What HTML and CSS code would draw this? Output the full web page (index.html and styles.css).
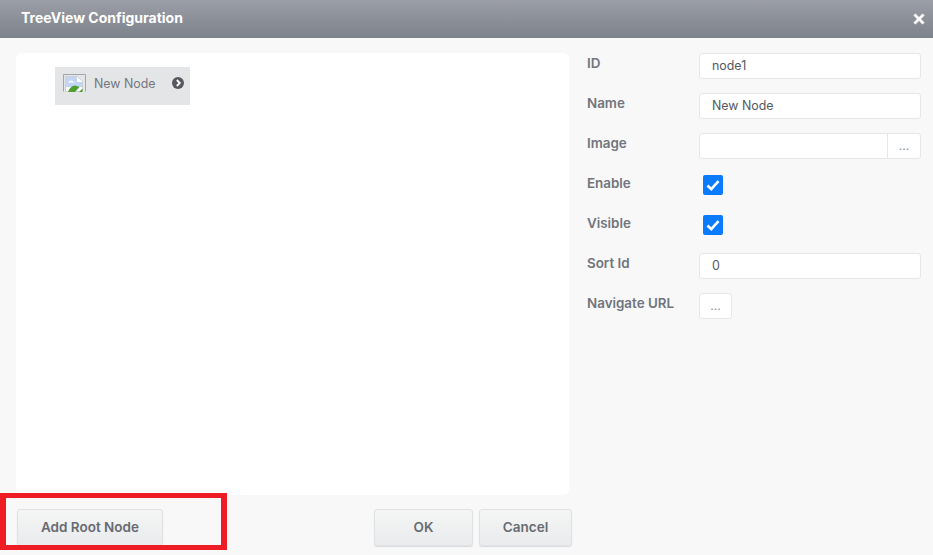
FILE: index.html
```html
<!DOCTYPE html>
<html lang="en">
<head>
<meta charset="utf-8">
<title>TreeView Configuration</title>
<link rel="stylesheet" href="styles.css">
</head>
<body>
<div class="dialog">
  <header class="titlebar">
    <span class="title">TreeView Configuration</span>
    <svg class="close" viewBox="0 0 12 12" width="12" height="12"><path d="M2.4 0.8 6 4.4 9.6 0.8 11.2 2.4 7.6 6 11.2 9.6 9.6 11.2 6 7.6 2.4 11.2 0.8 9.6 4.4 6 0.8 2.4Z" fill="#fff" stroke="#fff" stroke-width=".6" stroke-linejoin="round"/></svg>
  </header>
  <main class="body">
    <section class="tree">
      <div class="node">
        <svg class="broken" viewBox="0 0 23 18" width="23" height="18">
          <path d="M.5 17.500V.5h22v17" fill="none" stroke="#a4a6a9"/>
          <path d="M2.500 2.500h12l5 5v10h-17Z" fill="#fff" stroke="#c3c6cb" stroke-width=".8"/>
          <path d="M3 3h11v5h5v5H3Z" fill="#c2d6f3"/>
          <path d="M5 8.500q2-3 4.500-1.500l2.500 1.500Z" fill="#fff"/>
          <path d="M5 18q2-6 7-6.500 3 .5 4.500 1.500L12 18Z" fill="#4f9f33"/>
          <path d="M16 18l3.500-3.500V18Z" fill="#4f9f33"/>
        </svg>
        <span class="node-label">New Node</span>
        <svg class="node-arrow" viewBox="0 0 12 12" width="12" height="12"><circle cx="6" cy="6" r="6" fill="#55585e"/><path d="M4.800 3 7.800 6 4.800 9" fill="none" stroke="#fff" stroke-width="1.800"/></svg>
      </div>
    </section>
    <section class="props">
      <div class="row"><label class="label">ID</label><div class="field">node1</div></div>
      <div class="row"><label class="label">Name</label><div class="field">New Node</div></div>
      <div class="row"><label class="label">Image</label><div class="field picker"><span class="picker-value"></span><span class="dots-cell">...</span></div></div>
      <div class="row"><label class="label">Enable</label><span class="check"><svg viewBox="0 0 20 20" width="20" height="20"><path d="M4.500 10.500 8.300 14.200 15.500 6.200" fill="none" stroke="#fff" stroke-width="2.600"/></svg></span></div>
      <div class="row"><label class="label">Visible</label><span class="check"><svg viewBox="0 0 20 20" width="20" height="20"><path d="M4.500 10.500 8.300 14.200 15.500 6.200" fill="none" stroke="#fff" stroke-width="2.600"/></svg></span></div>
      <div class="row"><label class="label">Sort Id</label><div class="field">0</div></div>
      <div class="row"><label class="label">Navigate URL</label><button class="dots-btn">...</button></div>
    </section>
  </main>
  <footer class="footer">
    <button class="btn btn-root">Add Root Node</button>
    <button class="btn btn-ok">OK</button>
    <button class="btn btn-cancel">Cancel</button>
  </footer>
  <div class="highlight"></div>
</div>
</body>
</html>
```
FILE: styles.css
```css
* { box-sizing: border-box; }
html, body { margin: 0; padding: 0; }
body { width: 933px; height: 555px; overflow: hidden; background: #f8f8f8; font-family: Inter, Roboto, sans-serif; }
.dialog { position: relative; width: 933px; height: 555px; background: #f8f8f8; overflow: hidden; }
.titlebar { height: 38px; display: flex; align-items: center; justify-content: space-between; padding: 0 8px 4px 21px; background: linear-gradient(#9b9ea6, #7e828a); }
.title { color: #fff; font-size: 14px; font-weight: 700; }
.close { display: block; margin-top: 4px; }
.body { display: flex; padding: 15px 12px 0 16px; height: 457px; }
.tree { width: 553px; height: 442px; background: #fff; border-radius: 6px; padding: 14px 0 0 39px; }
.node { display: flex; align-items: center; width: 135px; height: 38px; background: #e4e5e7; padding: 0 6px 6px 8px; }
.broken { display: block; }
.node-label { margin-left: 8px; font-size: 12.4px; color: #74777d; flex: 1; }
.node-arrow { display: block; }
.props { margin-left: 18px; width: 334px; display: flex; flex-direction: column; gap: 14px; }
.row { display: flex; align-items: flex-start; height: 26px; }
.label { width: 112px; font-size: 13.4px; font-weight: 600; color: #71757d; line-height: 20px; }
.field { width: 222px; height: 26px; background: #fff; border: 1px solid #e6e7ec; border-radius: 3px; padding: 0 12px; font-size: 12.4px; line-height: 24px; color: #55585e; }
.picker { display: flex; padding: 0; }
.picker-value { flex: 1; }
.dots-cell { width: 33px; border-left: 1px solid #e6e7ec; text-align: center; color: #8b8e94; font-size: 12px; line-height: 24px; }
.check { width: 20px; height: 20px; margin: 2px 0 0 4px; background: #0a7bff; border-radius: 2px; display: block; }
.check svg { display: block; }
.dots-btn { width: 33px; height: 26px; padding: 0; background: #fff; border: 1px solid #e6e7ec; border-radius: 3px; color: #8b8e94; font: 12px/24px Inter, sans-serif; }
.footer { display: flex; padding: 14px 0 0 17px; }
.btn { height: 37px; border: 1px solid #dfe1e4; border-radius: 3px; background: linear-gradient(#f4f5f5, #eaebec); color: #676b72; font: 600 13.5px Inter, sans-serif; padding: 0 0 2px; box-shadow: 0 1px 1px #d8dadd; }
.btn-root { width: 146px; }
.btn-ok { width: 99px; margin-left: 211px; }
.btn-cancel { width: 93px; margin-left: 6px; }
.highlight { position: absolute; left: 0; top: 493px; width: 227px; height: 57px; border: 6px solid #ee1c25; border-top-width: 5px; border-bottom-width: 5px; }
```
